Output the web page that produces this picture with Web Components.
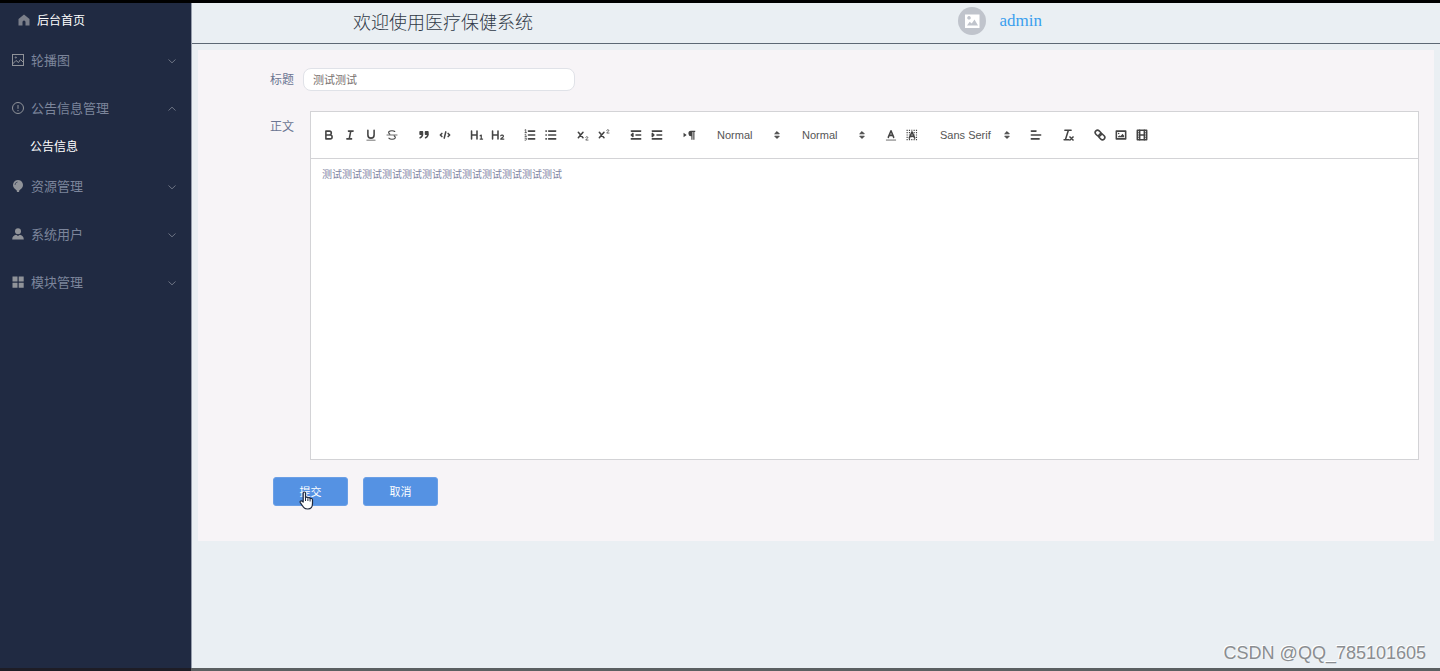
<!DOCTYPE html>
<html lang="zh-CN">
<head>
<meta charset="utf-8">
<meta name="viewport" content="width=device-width, initial-scale=1">
<title>医疗保健系统</title>
<style>
html, body { margin: 0; height: 100%; }
body { font-family: "Liberation Sans", "Noto Sans CJK SC", sans-serif; background: #eaeff3; }
</style>
</head>
<body>
<admin-app></admin-app>

<template id="t-app">
<style>
:host { display: flex; flex-direction: column; min-height: 100vh; box-sizing: border-box; border-top: 3px solid #000; position: relative; }
.body { flex: 1; display: grid; grid-template-columns: 191px 1fr; }
.main { border-left: 1px solid #969dab; min-width: 0; }
.foot { height: 3px; display: grid; grid-template-columns: 191px 1fr; background: #5b5f61; }
.foot::before { content: ""; background: #1e1d26; }
.mark { position: absolute; right: 14px; bottom: 7px; font-size: 18px; line-height: 22px; color: #8a8d90; text-shadow: -1px -1px 0 #fff; }
</style>
<div class="body">
  <side-menu></side-menu>
  <div class="main">
    <top-bar></top-bar>
    <notice-form></notice-form>
  </div>
</div>
<div class="foot"></div>
<div class="mark">CSDN @QQ_785101605</div>
</template>

<template id="t-menu">
<style>
:host { display: block; background: #202a42; }
</style>
<nav>
  <menu-entry kind="home" icon="home">后台首页</menu-entry>
  <menu-entry icon="picture" arrow="down">轮播图</menu-entry>
  <menu-entry icon="warning" arrow="up">公告信息管理</menu-entry>
  <menu-entry kind="sub">公告信息</menu-entry>
  <menu-entry icon="bulb" arrow="down">资源管理</menu-entry>
  <menu-entry icon="user" arrow="down">系统用户</menu-entry>
  <menu-entry icon="grid" arrow="down">模块管理</menu-entry>
</nav>
</template>

<template id="t-entry">
<style>
:host { display: block; }
a { display: flex; align-items: center; height: 48px; padding: 0 14px 0 12px; box-sizing: border-box; gap: 7px; color: #7c859b; font-size: 13px; text-decoration: none; }
.icon { width: 12px; height: 12px; color: #909399; flex: none; }
.text { flex: 1; padding-bottom: 2px; }
.arrow { width: 10px; height: 10px; color: #6d7484; margin-top: 2px; }
svg { display: block; width: 100%; height: 100%; }
:host([kind="home"]) a { height: 33px; padding-left: 18px; color: #fff; font-size: 12px; }
:host([kind="home"]) .icon { color: #7b7f8a; }
:host([kind="home"]) .text { padding: 0; }
:host([kind="sub"]) a { height: 30px; padding: 0 0 2px 30px; color: #fff; font-size: 12px; }
:host([kind="sub"]) .icon, :host(:not([arrow])) .arrow { display: none; }
</style>
<a href="#"><span class="icon"></span><span class="text"><slot></slot></span><span class="arrow"></span></a>
</template>

<template id="t-top">
<style>
:host { display: grid; grid-template-columns: 557fr 443fr; align-items: center; height: 41px; box-sizing: border-box; padding: 0 0 4px 161px; border-bottom: 1px solid #5d6874; }
h1 { margin: 0; font-size: 18px; line-height: 24px; font-weight: 300; font-family: "KaiTi", "Noto Sans CJK SC", sans-serif; color: #303947; }
.user { display: flex; align-items: center; gap: 13px; color: #3a9fee; font: 17px/20px "Liberation Serif", serif; }
svg { width: 28px; height: 28px; display: block; }
</style>
<h1>欢迎使用医疗保健系统</h1>
<div class="user">
  <svg viewBox="0 0 28 28"><circle cx="14" cy="14" r="14" fill="#c0c4cc"/><path fill="#fff" fill-rule="evenodd" d="M7 7.500h14.500v13.500H7zM9 18.500h11l-3.500-6-2.800 4-2-1.800zM11 9a1.800 1.800 0 1 0 .01 0z"/></svg>
  <span>admin</span>
</div>
</template>

<template id="t-form">
<style>
:host { display: block; margin: 6px 6px 0; background: #f7f4f7; padding: 18px 15px 35px 72px; }
.row { display: flex; align-items: flex-start; gap: 9px; }
label { width: 24px; font-size: 12px; line-height: 24px; color: #6b7592; white-space: nowrap; }
input { width: 272px; height: 23px; box-sizing: border-box; margin: 0; padding: 0 9px 2px; border: 1px solid #e0e2e8; border-radius: 8px; background: #fff; color: #77706e; font: 11px "Liberation Sans", "Noto Sans CJK SC", sans-serif; outline: none; }
.text { margin-top: 19px; gap: 16px; }
.text label { padding-top: 4px; }
rich-editor { flex: 1; min-width: 0; }
.actions { display: flex; gap: 15px; margin: 17px 0 0 3px; }
button { position: relative; width: 75px; height: 29px; padding: 0 0 2px; border: 1px solid #6b9fe6; border-radius: 3px; background: #5592e3; color: #fff; font: 11px "Liberation Sans", "Noto Sans CJK SC", sans-serif; }
.hand { position: absolute; left: 25px; top: 13px; width: 16px; height: 19px; }
</style>
<form>
  <div class="row"><label for="title">标题</label><input id="title" type="text" value="测试测试"></div>
  <div class="row text"><label>正文</label><rich-editor></rich-editor></div>
  <div class="actions">
    <button type="button">提交<svg class="hand" viewBox="0 0 16 19"><path fill="#fff" stroke="#20293c" stroke-width="1.200" stroke-linejoin="round" d="M4.200 11V2.200c0-1.600 2.300-1.600 2.300 0v4.600c.3-1 2.200-.8 2.400.2.600-.8 2.100-.4 2.200.6.800-.6 2.400 0 2.400 1.300v3.600c0 3-1.500 5.500-4.700 5.500-3.300 0-4.300-1.300-5.300-3.200L1.300 11.600c-.9-1.700 1.300-2.300 2.900-.6z"/><path stroke="#20293c" d="M6.500 7v3M8.900 7.500V10M11.100 8v2.500"/></svg></button>
    <button type="button">取消</button>
  </div>
</form>
</template>

<template id="t-editor">
<style>
:host { display: block; border: 1px solid #d3d3d6; background: #fff; }
.bar { display: flex; flex-wrap: wrap; align-items: center; gap: 11px; padding: 14px 7px; border-bottom: 1px solid #d3d3d6; }
.group { display: flex; }
textarea { display: block; width: 100%; height: 300px; box-sizing: border-box; border: 0; margin: 0; padding: 8px 11px; resize: none; outline: none; background: none; color: #80839f; font: 10px/16px "Liberation Sans", "Noto Sans CJK SC", sans-serif; }
</style>
<div class="bar"></div>
<textarea aria-label="正文">测试测试测试测试测试测试测试测试测试测试测试测试</textarea>
</template>

<template id="t-tool">
<style>
:host { display: block; }
button { display: block; width: 21px; height: 18px; margin: 0; padding: 2px 3px 2px 4px; border: 0; background: none; }
svg { display: block; width: 14px; height: 14px; color: #444; }
.s { fill: none; stroke: currentColor; stroke-width: 2; stroke-linecap: round; stroke-linejoin: round; }
.t { stroke-width: 1; }
.m { stroke-width: 1.5; }
.f { fill: currentColor; }
</style>
<button type="button"></button>
</template>

<template id="t-picker">
<style>
:host { display: block; position: relative; width: 74px; height: 18px; }
:host([wide]) { width: 81px; }
select { display: block; width: 100%; height: 18px; margin: 0; padding: 0 12px 0 7px; border: 0; appearance: none; background: none; color: #555; font: 11px/18px "Liberation Sans", sans-serif; outline: none; }
svg { position: absolute; right: 0; top: 2px; width: 14px; height: 14px; pointer-events: none; fill: #444; stroke: #444; stroke-linejoin: round; }
</style>
<select><option></option></select>
<svg viewBox="0 0 18 18"><path d="M6 7.500h6L9 4.500zM6 10.500h6L9 13.500z"/></svg>
</template>

<script>
const menuIcons = {
  home: '<path fill="currentColor" d="M6 .5 11.500 5v6.500H7.500V8a1.500 1.500 0 0 0-3 0v3.500H.5V5z"/>',
  picture: '<g fill="none" stroke="currentColor"><rect x=".5" y=".5" width="11" height="11"/><path d="M.5 10 4 6.500l2.500 2 2-3 3 3"/><circle cx="3.800" cy="3.500" r=".6"/></g>',
  warning: '<circle cx="6" cy="6" r="5.500" fill="none" stroke="currentColor"/><path d="M6 3v3.800M6 8v1.200" stroke="currentColor"/>',
  bulb: '<path fill="currentColor" d="M6 0a5 5 0 0 1 3.500 8.500L7.800 10H4.200L2.500 8.500A5 5 0 0 1 6 0zM4.500 10h3L7 12H5z"/><path d="M3 5a3 3 0 0 1 2.500-3" fill="none" stroke="#4a5164"/>',
  user: '<circle cx="6" cy="3.300" r="3" fill="currentColor"/><path fill="currentColor" d="M.2 11.500c0-3 1.800-4.500 4-4.800L6 8l1.800-1.300c2.200.3 4 1.800 4 4.800z"/>',
  grid: '<path fill="currentColor" d="M.5.5h5v5h-5zM6.700.5h5v5h-5zM.5 6.700h5v5h-5zM6.700 6.700h5v5h-5z"/>'
};
const arrows = { down: 'M1.500 3.500 5 6.800 8.500 3.500', up: 'M1.500 6.500 5 3.200 8.500 6.500' };

const p = (d, c = 's') => `<path class="${c}" d="${d}"/>`;
const toolIcons = {
  bold: p('M5 4h4.500a2.500 2.500 0 0 1 0 5H5zM5 9h5.500a2.500 2.500 0 0 1 0 5H5z'),
  italic: p('M7 4h6M5 14h6M8 14l2-10'),
  underline: p('M5 3v6a4.012 4.012 0 0 0 4 4 4.012 4.012 0 0 0 4-4V3') + '<rect class="f" x="3" y="15" width="12" height="1" rx=".5"/>',
  strike: p('M2.500 9h13', 's t') + p('M6.200 8C3 5.500 5.500 3.500 9 3.500c2 0 3 .5 3.500 1M11.800 10c3.200 2.500 1 4.500-2.800 4.500-2 0-3.200-.5-4-1.500', 's m'),
  quote: '<path class="f s" d="M4 5h3v3H4zM11 5h3v3h-3z"/>' + p('M7 8c0 2-.5 3.500-3 4.500M14 8c0 2-.5 3.500-3 4.500'),
  code: p('M5 7 3 9l2 2M13 7l2 2-2 2M10 5 8 13'),
  h1: p('M2 4v10M9 4v10M2 9h7') + p('M13 10 14.500 9v5M13 14.300h3.200', 's m'),
  h2: p('M2 4v10M9 4v10M2 9h7') + p('M12.500 10c.8-1.500 3.700-1 3.500.7-.2 1.200-2.700 2.200-3.500 3.600h4', 's m'),
  ol: p('M7 4h8M7 9h8M7 14h8') + p('M2.500 2.500 3.500 2v4M2.500 6h2M2.500 8.500c2-.8 2 .7 0 2.500h2M2.500 13h2l-1 1.300c2 .3.500 2.200-1 1.500', 's t'),
  ul: p('M6 4h9M6 9h9M6 14h9M2.500 4h.5M2.500 9h.5M2.500 14h.5'),
  sub: p('M3 5.500 9 12.500M9 5.500 3 12.500') + p('M12.500 12c.5-1.500 3-1 2.700.5-.2 1-2.200 1.500-2.700 3h3', 's t'),
  sup: p('M3 5.500 9 12.500M9 5.500 3 12.500') + p('M12.500 3c.5-1.500 3-1 2.700.5-.2 1-2.200 1.500-2.700 3h3', 's t'),
  outdent: p('M3 14h12M3 4h12M9 9h6M5 7v4L3 9z'),
  indent: p('M3 14h12M3 4h12M9 9h6M3 7v4l2-2z'),
  direction: '<path class="f" d="M2 12V6l4 3zM11.500 3.500H17V5h-1v10h-1.500V5h-1v10H12v-4.500a3.500 3.500 0 0 1-.5-7z"/>',
  color: p('M5.500 12 9 3.500 12.500 12M6.500 9.500h5') + p('M3 15.500h12', 's t'),
  background: '<path d="M2 3h14M2 6h14M2 9h14M2 12h14M2 15h14" stroke="currentColor" stroke-dasharray="1.500 1.500" fill="none" stroke-width="1.500"/><path fill="#fff" d="M9 2 14 14H4z" opacity=".7"/>' + p('M5.500 13 9 5l3.500 8M6.500 10.500h5'),
  align: p('M3 9h12M3 14h10M3 4h6'),
  clean: p('M5 3h8M6 14l3.500-11M4 15h6') + p('M11.500 11.500l4 4M15.500 11.500l-4 4'),
  link: '<g transform="rotate(45 9 9)"><rect class="s" x="1.500" y="6" width="8.500" height="6" rx="3"/><rect class="s" x="8" y="6" width="8.500" height="6" rx="3"/></g>',
  image: '<rect class="s" x="3" y="4" width="12" height="10"/><circle class="f" cx="6" cy="7" r="1"/><path class="f" d="M5 12v-1l2-1.500 1.500.8 2.500-3 2 2.700v2z"/>',
  video: '<rect class="s" x="3" y="3" width="12" height="12"/>' + p('M6 3v12M12 3v12M6 9h6', 's') + p('M3 6h2M3 9h2M3 12h2M13 6h2M13 9h2M13 12h2', 's t')
};
const toolNames = { bold: '加粗', italic: '斜体', underline: '下划线', strike: '删除线', quote: '引用', code: '代码', h1: '标题 1', h2: '标题 2', ol: '有序列表', ul: '无序列表', sub: '下标', sup: '上标', outdent: '减少缩进', indent: '增加缩进', direction: '文本方向', color: '字体颜色', background: '背景颜色', align: '对齐', clean: '清除格式', link: '链接', image: '图片', video: '视频' };
const toolbar = [
  ['bold', 'italic', 'underline', 'strike'], ['quote', 'code'], ['h1', 'h2'], ['ol', 'ul'],
  ['sub', 'sup'], ['outdent', 'indent'], ['direction'],
  { text: 'Normal', label: '字号' }, { text: 'Normal', label: '标题级别' }, ['color', 'background'],
  { text: 'Sans Serif', label: '字体', wide: true }, ['align'], ['clean'], ['link', 'image', 'video']
];

class Base extends HTMLElement {
  mount(id) {
    this.attachShadow({ mode: 'open' }).append(document.getElementById(id).content.cloneNode(true));
    return this.shadowRoot;
  }
}
customElements.define('tool-button', class extends Base {
  connectedCallback() {
    const b = this.mount('t-tool').querySelector('button');
    const name = this.getAttribute('name');
    b.setAttribute('aria-label', toolNames[name]);
    b.innerHTML = `<svg viewBox="0 0 18 18">${toolIcons[name]}</svg>`;
  }
});
customElements.define('tool-picker', class extends Base {
  connectedCallback() {
    const r = this.mount('t-picker');
    r.querySelector('option').textContent = this.getAttribute('text');
    r.querySelector('select').setAttribute('aria-label', this.getAttribute('label'));
  }
});
customElements.define('rich-editor', class extends Base {
  connectedCallback() {
    this.mount('t-editor').querySelector('.bar').innerHTML = toolbar.map(g => Array.isArray(g)
      ? `<div class="group">${g.map(n => `<tool-button name="${n}"></tool-button>`).join('')}</div>`
      : `<tool-picker text="${g.text}" label="${g.label}"${g.wide ? ' wide' : ''}></tool-picker>`).join('');
  }
});
customElements.define('menu-entry', class extends Base {
  connectedCallback() {
    const r = this.mount('t-entry');
    const icon = this.getAttribute('icon'), arrow = this.getAttribute('arrow');
    if (icon) r.querySelector('.icon').innerHTML = `<svg viewBox="0 0 12 12">${menuIcons[icon]}</svg>`;
    if (arrow) r.querySelector('.arrow').innerHTML = `<svg viewBox="0 0 10 10"><path fill="none" stroke="currentColor" d="${arrows[arrow]}"/></svg>`;
  }
});
for (const [tag, id] of [['side-menu', 't-menu'], ['top-bar', 't-top'], ['notice-form', 't-form'], ['admin-app', 't-app']]) {
  customElements.define(tag, class extends Base {
    connectedCallback() { this.mount(id); }
  });
}
</script>
</body>
</html>
